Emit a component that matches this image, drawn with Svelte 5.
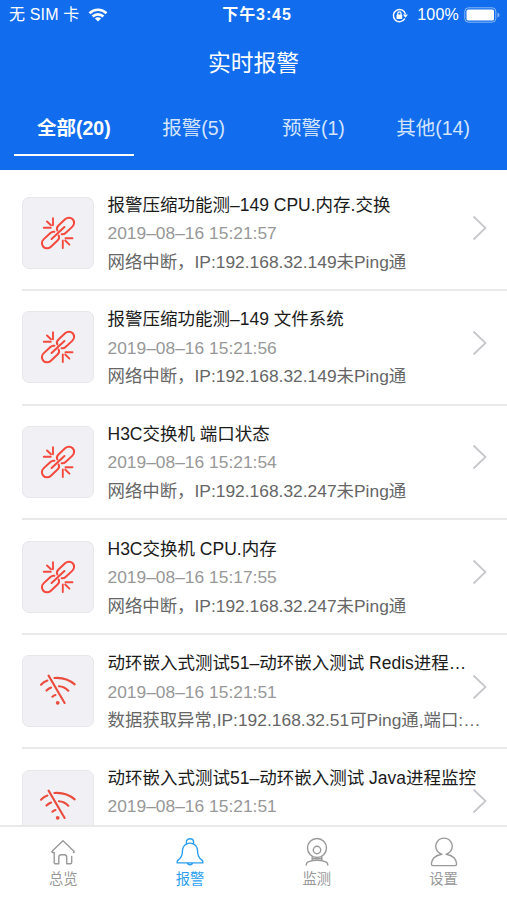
<script lang="ts">
	type Alarm = { kind: 'link' | 'wifi'; title: string; time: string; detail: string };

	const tabs = [
		{ name: '全部', count: 20 },
		{ name: '报警', count: 5 },
		{ name: '预警', count: 1 },
		{ name: '其他', count: 14 },
	];

	const nav = [
		{ icon: 'home', label: '总览' },
		{ icon: 'bell', label: '报警' },
		{ icon: 'camera', label: '监测' },
		{ icon: 'user', label: '设置' },
	];

	const alarms: Alarm[] = [
		{ kind: 'link', title: '报警压缩功能测–149 CPU.内存.交换', time: '2019–08–16 15:21:57', detail: '网络中断，IP:192.168.32.149未Ping通' },
		{ kind: 'link', title: '报警压缩功能测–149 文件系统', time: '2019–08–16 15:21:56', detail: '网络中断，IP:192.168.32.149未Ping通' },
		{ kind: 'link', title: 'H3C交换机 端口状态', time: '2019–08–16 15:21:54', detail: '网络中断，IP:192.168.32.247未Ping通' },
		{ kind: 'link', title: 'H3C交换机 CPU.内存', time: '2019–08–16 15:17:55', detail: '网络中断，IP:192.168.32.247未Ping通' },
		{ kind: 'wifi', title: '动环嵌入式测试51–动环嵌入测试 Redis进程…', time: '2019–08–16 15:21:51', detail: '数据获取异常,IP:192.168.32.51可Ping通,端口:…' },
		{ kind: 'wifi', title: '动环嵌入式测试51–动环嵌入测试 Java进程监控', time: '2019–08–16 15:21:51', detail: '' },
	];

	let activeTab = $state(0);
	let activeNav = $state(1);
</script>

<div class="app">
	<header>
		<div class="status">
			<div class="carrier">
				<span>无 SIM 卡</span>
				<svg width="20" height="14" viewBox="0 0 20 14" fill="none" stroke="#fff" stroke-width="2.7">
					<path d="M1.5 5.2a12.2 12.2 0 0 1 17 0M4.6 8.5a7.8 7.8 0 0 1 10.8 0" />
					<path d="M10 13.6 6.9 10.6a4.4 4.4 0 0 1 6.2 0z" fill="#fff" stroke="none" />
				</svg>
			</div>
			<div class="clock">下午3:45</div>
			<div class="power">
				<svg width="16" height="15" viewBox="0 0 16 15" fill="none" stroke="#fff" stroke-width="1.4">
					<path d="M12.8 10.6A6.1 6.1 0 1 1 13.4 6" />
					<path d="M10.9 6.5h5l-2.5 3.2z" fill="#fff" stroke="none" />
					<rect x="4.6" y="6.6" width="5.6" height="4.4" rx=".6" fill="#fff" stroke="none" />
					<path d="M5.8 7V5.5a1.6 1.6 0 0 1 3.200 0V7" stroke-width="1.2" />
				</svg>
				<span>100%</span>
				<svg width="36" height="16" viewBox="0 0 36 16">
					<rect x=".8" y=".8" width="31" height="14.4" rx="3.6" fill="none" stroke="#fff" stroke-opacity=".5" />
					<rect x="2.5" y="2.5" width="27.5" height="11" rx="1.6" fill="#fff" />
					<path d="M33.5 5.5q2 .8 2 2.5t-2 2.5z" fill="#fff" fill-opacity=".5" />
				</svg>
			</div>
		</div>
		<h1>实时报警</h1>
		<div class="tabs">
			{#each tabs as tab, i}
				<button class:active={activeTab === i} onclick={() => (activeTab = i)}>{tab.name}({tab.count})</button>
			{/each}
		</div>
	</header>

	<main>
		{#each alarms as alarm}
			<article>
				<div class="thumb">
					{#if alarm.kind === 'link'}
						<svg width="36" height="36" viewBox="0 0 36 36" fill="none" stroke="#f4493d" stroke-width="2" stroke-linecap="round">
							<g transform="rotate(-43 18 18)">
								<path d="M19.200 15.800q.8-3 4.300-3h9.400a5.200 5.200 0 0 1 0 10.400h-9.400q-2.600 0-3.700-1.900" />
								<path d="M16.800 20.200q-.8 3-4.300 3H3.100a5.200 5.200 0 0 1 0-10.400h9.400q2.600 0 3.700 1.900" />
								<path d="M9.200 18h17.600" />
							</g>
							<path d="M13 3.200v7M3.800 12.800h7M7 6.500l4 3.800M22.800 25.500v7.500M25.500 23.200h7M25.200 25.500l4.200 4.200" stroke-width="1.9" />
						</svg>
					{:else}
						<svg width="36" height="36" viewBox="0 0 36 36" fill="none" stroke="#ea4c3e" stroke-width="2.1" stroke-linecap="round">
							<path d="M8.600 2.600 24.600 30M1 11.700q2.800-2.900 6.400-4.200M14.400 5Q26 4 34.700 11.400M6.500 17.600q2-2 4.600-3M18.900 13.300q5.400.3 9.400 4.400M12.400 23.700q1.300-1.300 3.100-1.700" />
							<circle cx="17.700" cy="29.800" r="1.900" fill="#ea4c3e" stroke="none" />
						</svg>
					{/if}
				</div>
				<div class="body">
					<h2>{alarm.title}</h2>
					<time>{alarm.time}</time>
					<p>{alarm.detail}</p>
				</div>
				<svg class="chevron" width="16" height="26" viewBox="0 0 16 26" fill="none" stroke="#c7c7cc" stroke-width="1.8">
					<path d="M1.5 1.5 13.500 13 1.500 24.500" />
				</svg>
			</article>
		{/each}
	</main>

	<nav>
		{#each nav as item, i}
			<button class:active={activeNav === i} onclick={() => (activeNav = i)}>
				<svg width="30" height="30" viewBox="0 0 30 30" fill="none" stroke="currentColor" stroke-width="1.4" stroke-linecap="round" stroke-linejoin="round">
					{#if item.icon === 'home'}
						<path d="M6.200 15.500H4.300q-.9-.7 0-1.500L15 3.700l11.200 10.900q.2.900-.8.900M6.200 15.500v10.300q0 1 1 1h3.600v-6.500q0-2.500 2.500-2.500h2.900q2.500 0 2.500 2.500v6.500h3.600q1.400 0 1.400-1.400v-6" />
					{:else if item.icon === 'bell'}
						<path d="M11.400 7V5.200q0-3.400 3.600-3.400t3.600 3.400V7M11.400 7.200q3.600-2.200 7.200 0 4 2 4 7.500 0 5 4.300 8.400.9.700.9 1.500v1.300H2.200v-1.300q0-.8.900-1.500 4.300-3.400 4.300-8.400 0-5.500 4-7.500zM12.500 26.400q2.500 2.700 5 0" />
					{:else if item.icon === 'camera'}
						<circle cx="15" cy="11" r="9.500" />
						<circle cx="15" cy="13" r="3.700" />
						<path d="M10.200 19.600v3.600M19.800 19.600v3.600M10.200 21.500h9.600M4.200 28q0-2.600 2.600-3.400Q15 21.800 23.200 24.600q2.600.8 2.600 3.400" />
					{:else}
						<path d="M12.800 17.200a8.200 8.200 0 1 1 4.400 0q9.800 1.600 10.400 9.800 0 1.600-1.600 1.600H4q-1.600 0-1.600-1.600.6-8.200 10.400-9.800" />
					{/if}
				</svg>
				<span>{item.label}</span>
			</button>
		{/each}
	</nav>
</div>

<style>
	:global(body) {
		background: #fff;
	}

	.app {
		display: flex;
		flex-direction: column;
		width: 507px;
		height: 900px;
		overflow: hidden;
		background: #fff;
		font-family: "Liberation Sans", "Noto Sans CJK SC", sans-serif;
	}

	h1, h2, p {
		margin: 0;
		font-weight: 400;
	}

	button {
		border: 0;
		padding: 0;
		background: none;
		font: inherit;
		cursor: pointer;
	}

	/* header */

	header {
		flex: none;
		height: 169.5px;
		background: #116ded;
		color: #fff;
	}

	.status {
		display: grid;
		grid-template-columns: 1fr auto 1fr;
		align-items: center;
		height: 30px;
		padding: 0 7px 0 9px;
		font-size: 16px;
		line-height: 30px;
	}

	.carrier, .power {
		display: flex;
		align-items: center;
	}

	.carrier {
		gap: 9px;
	}

	.carrier span {
		letter-spacing: 0.15px;
	}

	.clock {
		font-weight: 700;
		letter-spacing: 0.9px;
		margin-left: 5px;
	}

	.power {
		justify-content: flex-end;
		gap: 5px;
	}

	.power span {
		margin-left: 4px;
		letter-spacing: 0.2px;
	}

	h1 {
		height: 66px;
		line-height: 67px;
		font-size: 22.8px;
		text-align: center;
	}

	.tabs {
		display: grid;
		grid-template-columns: repeat(4, 1fr);
		padding: 0 14px;
	}

	.tabs button {
		height: 60px;
		border-bottom: 2.5px solid transparent;
		color: #d3e4fc;
		font-size: 19.5px;
		line-height: 64px;
	}

	.tabs button.active {
		border-color: #fff;
		color: #fff;
		font-weight: 700;
	}

	/* alarm list */

	main {
		flex: 1;
		min-height: 0;
		padding-top: 7px;
		overflow: hidden;
	}

	article {
		display: flex;
		align-items: center;
		height: 114.6px;
		margin-left: 21.5px;
		padding-right: 19px;
		box-sizing: border-box;
		border-bottom: 2px solid #e9e9eb;
	}

	.thumb {
		display: flex;
		flex: none;
		align-items: center;
		justify-content: center;
		width: 72.5px;
		height: 72px;
		box-sizing: border-box;
		border: 1px solid #e7e7eb;
		border-radius: 7px;
		background: #f1f0f5;
	}

	.body {
		flex: 1;
		min-width: 0;
		height: 84px;
		margin-left: 13.5px;
		font-size: 17.4px;
		line-height: 28.5px;
		white-space: nowrap;
	}

	h2 {
		color: #1b1b1b;
		font-size: 17.5px;
	}

	time {
		display: block;
		color: #989898;
	}

	p {
		color: #666;
	}

	.chevron {
		flex: none;
		margin: -9px 0 0 -8px;
	}

	/* bottom bar */

	nav {
		display: grid;
		flex: none;
		grid-template-columns: repeat(4, 1fr);
		height: 75.5px;
		box-sizing: border-box;
		border-top: 2px solid #e9e9e9;
		background: #fff;
	}

	nav button {
		display: flex;
		flex-direction: column;
		align-items: center;
		padding-top: 10.5px;
		color: #999;
		font-size: 14.3px;
		line-height: 24px;
	}

	nav button.active {
		color: #2d9ff0;
	}
</style>
